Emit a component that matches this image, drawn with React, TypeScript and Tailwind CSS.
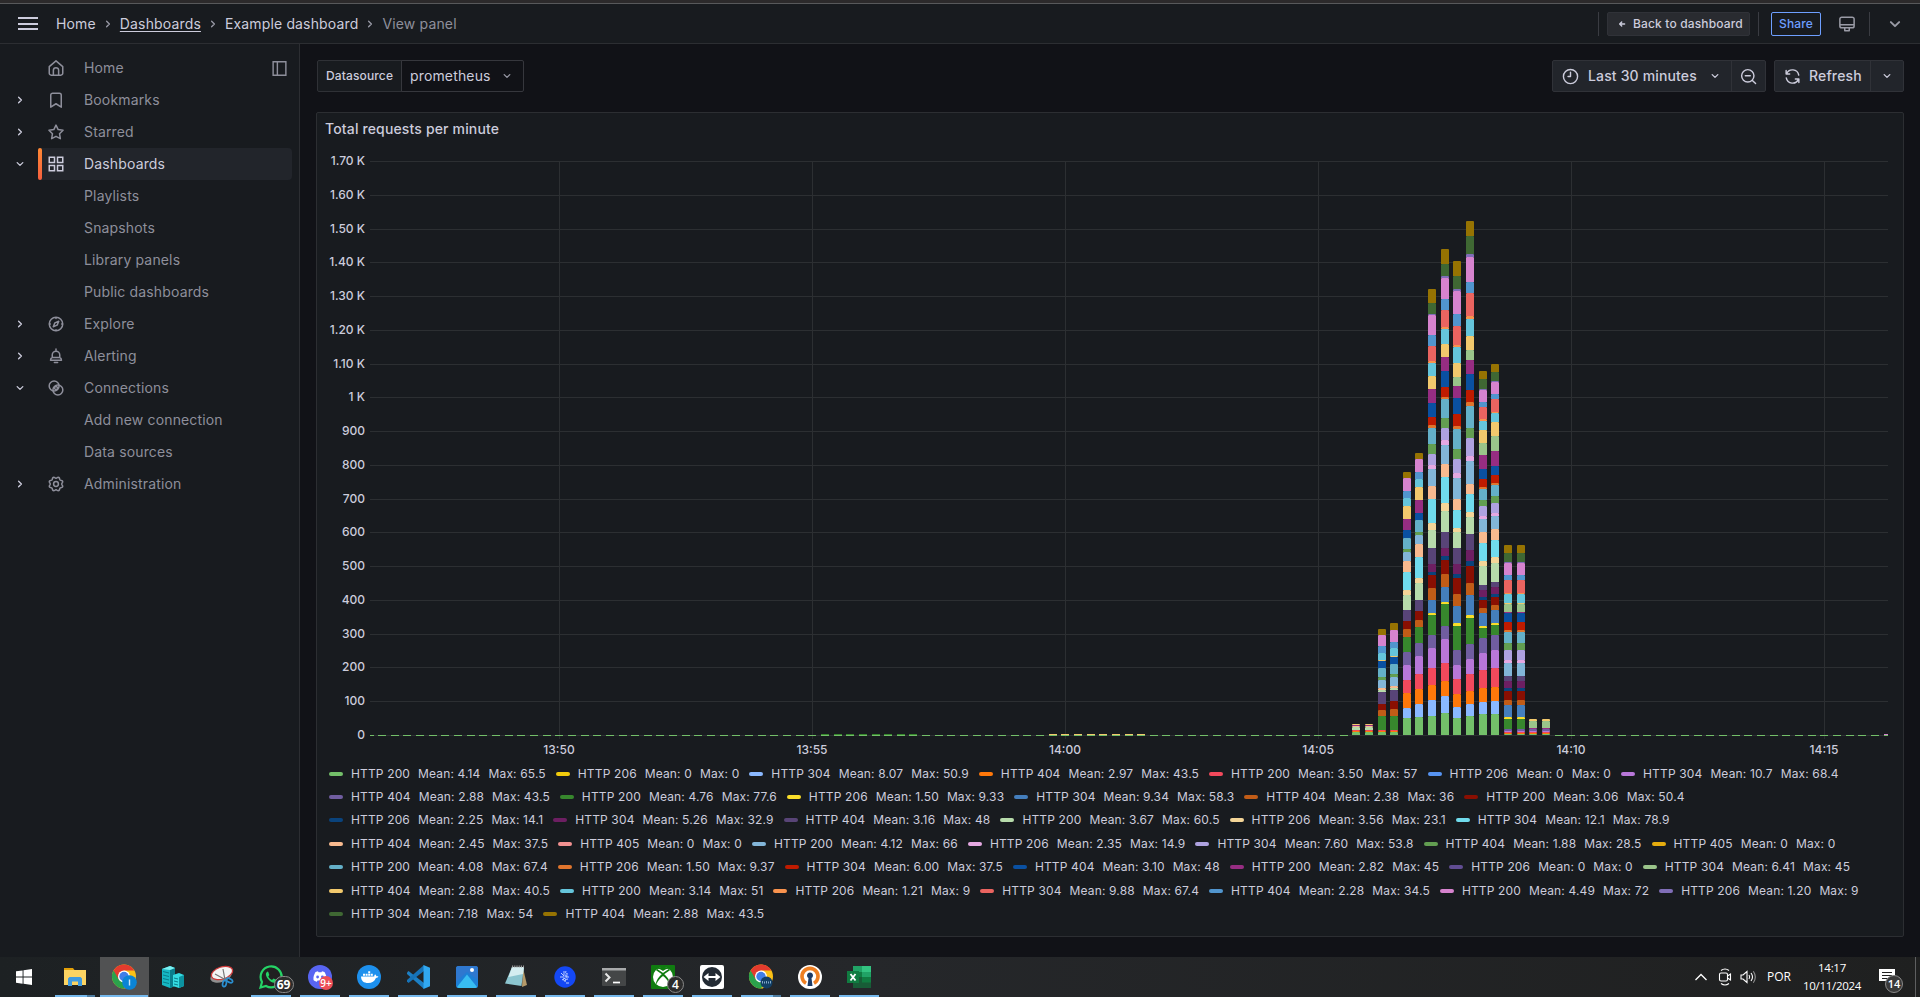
import React from "react";

const C = {
  s1: "#73BF69", s3: "#8AB8FF", s4: "#FF780A", s5: "#F2495C", s7: "#B877D9", s8: "#705DA0",
  s9: "#37872D", s10: "#FADE2A", s11: "#447EBC", s12: "#C15C17", s13: "#890F02", s14: "#0A437C",
  s15: "#6D1F62", s16: "#584477", s17: "#B7DBAB", s18: "#F4D598", s19: "#70DBED", s20: "#F9BA8F",
  s22: "#82B5D8", s23: "#E5A8E2", s24: "#AEA2E0", s25: "#629E51", s27: "#64B0C8", s28: "#E0752D",
  s29: "#BF1B00", s30: "#0A50A1", s31: "#962D82", s33: "#9AC48A", s34: "#F2C96D", s35: "#65C5DB",
  s36: "#F9934E", s37: "#EA6460", s38: "#5195CE", s39: "#D683CE", s40: "#806EB7", s41: "#3F6833",
  s42: "#967302",
} as const;
type Key = keyof typeof C;

// Each bar: "series:top" pairs from the bottom up, tops in thirds of a pixel below y=470.
const BARS: { x: number; d: string }[] = [
  { x: 1352, d: "1:786 4:783 5:780 17:771 20:768 31:765 34:762" },
  { x: 1365, d: "1:786 4:783 5:780 17:771 20:768 31:765 34:762" },
  { x: 1378, d: "1:786 4:783 5:780 9:738 12:720 13:702 16:666 17:660 20:654 22:630 25:621 27:594 30:573 34:570 35:549 38:528 39:495 42:477" },
  { x: 1390, d: "1:786 4:783 5:780 9:738 12:717 13:693 16:660 17:654 20:648 22:621 25:612 27:582 30:561 34:558 35:534 38:516 39:480 42:459" },
  { x: 1403, d: "1:744 3:714 4:669 5:630 7:585 8:546 9:501 12:477 13:453 16:420 17:375 18:360 19:306 20:273 22:246 25:237 27:204 30:180 31:147 34:108 35:84 38:63 39:24 42:6" },
  { x: 1415, d: "1:741 3:702 4:657 5:612 7:558 8:519 9:471 12:450 13:423 16:390 17:339 18:324 19:261 20:222 22:195 25:186 27:150 30:129 31:90 34:51 35:27 38:6 39:-33 42:-51" },
  { x: 1428, d: "1:738 3:690 4:645 5:594 7:534 8:495 9:435 10:429 11:390 12:354 13:315 14:306 15:282 16:234 17:180 18:159 19:87 20:48 22:-3 23:-15 24:-48 25:-78 27:-126 28:-135 29:-159 30:-201 31:-243 34:-282 35:-321 36:-327 37:-372 38:-405 39:-465 40:-468 41:-501 42:-543" },
  { x: 1441, d: "1:729 3:678 4:633 5:579 7:507 8:468 9:402 10:396 11:351 12:312 13:270 14:258 15:234 16:186 17:123 18:99 19:21 20:-18 22:-75 23:-90 24:-126 25:-156 27:-213 28:-219 29:-249 30:-297 31:-339 34:-378 35:-423 36:-429 37:-480 38:-513 39:-576 40:-582 41:-618 42:-663" },
  { x: 1453, d: "1:744 3:711 4:672 5:627 7:585 8:540 9:468 10:459 11:408 12:372 13:324 14:312 15:282 16:234 17:186 18:174 19:120 20:87 22:24 23:9 24:-33 25:-63 27:-123 28:-132 29:-168 30:-216 31:-252 33:-279 34:-321 35:-369 36:-375 37:-432 38:-468 39:-537 40:-543 41:-582 42:-627" },
  { x: 1466, d: "1:738 3:702 4:663 5:612 7:567 8:522 9:444 10:435 11:375 12:339 13:288 14:273 15:240 16:192 17:141 18:126 19:72 20:42 22:-27 23:-42 24:-96 25:-126 27:-192 28:-204 29:-240 30:-288 31:-330 33:-360 34:-402 35:-453 36:-462 37:-531 38:-564 39:-639 40:-648 41:-702 42:-747" },
  { x: 1479, d: "1:732 3:696 4:654 5:600 7:549 8:504 9:474 10:468 11:429 12:414 13:390 14:381 15:360 16:345 17:288 18:273 19:219 20:186 22:147 23:138 24:108 25:90 27:57 28:51 29:27 30:-3 31:-45 33:-81 34:-120 35:-147 36:-153 37:-189 38:-204 39:-240 40:-243 41:-273 42:-297" },
  { x: 1491, d: "1:732 3:693 4:651 5:594 7:540 8:495 9:465 10:459 11:420 12:405 13:381 14:372 15:351 16:336 17:279 18:261 19:210 20:177 22:138 23:129 24:99 25:78 27:45 28:39 29:15 30:-12 31:-57 33:-102 34:-144 35:-171 36:-174 37:-213 38:-228 39:-264 40:-267 41:-294 42:-318" },
  { x: 1504, d: "1:792 4:789 5:786 7:783 8:777 9:747 10:741 11:705 12:690 13:663 14:654 15:633 16:618 22:579 23:570 24:540 25:519 27:486 28:480 29:456 30:429 31:426 33:402 34:399 35:372 36:369 37:330 38:315 39:279 40:276 41:249 42:225" },
  { x: 1517, d: "1:792 4:789 5:786 7:783 8:777 9:747 10:741 11:705 12:690 13:663 14:654 15:633 16:618 22:579 23:570 24:540 25:519 27:486 28:480 29:456 30:429 31:426 33:402 34:399 35:372 36:369 37:330 38:315 39:279 40:276 41:249 42:225" },
  { x: 1529, d: "1:792 4:789 5:786 7:783 8:777 31:774 33:753 34:747" },
  { x: 1542, d: "1:792 4:789 5:786 7:783 8:777 31:774 33:753 34:747" },
];

// Chart origin inside the page: the drawing starts at (317, 149).
const OX = 317;
const OY = 149;

const Y_LABELS = ["1.70 K", "1.60 K", "1.50 K", "1.40 K", "1.30 K", "1.20 K", "1.10 K", "1 K", "900", "800", "700", "600", "500", "400", "300", "200", "100", "0"];
const X_LABELS: [number, string][] = [[559, "13:50"], [812, "13:55"], [1065, "14:00"], [1318, "14:05"], [1571, "14:10"], [1824, "14:15"]];

function Chart() {
  const marks: React.ReactNode[] = [];
  for (let n = -78; n <= 42; n++) {
    if (n >= 0 && n <= 15) continue;
    const raw = Math.round(1352.2 + 12.65 * n);
    const x = Math.max(raw, 370);
    const w = Math.min(raw + 8, 1888) - x;
    marks.push(<rect key={n} x={x} y={735} width={w} height={1} fill="#73BF69" />);
    const top = n >= -42 && n <= -35 ? "#37872D" : n >= -24 && n <= -17 ? "#F2C96D" : n === 42 ? "#D683CE" : null;
    if (top) marks.push(<rect key={`t${n}`} x={x} y={734} width={w} height={1} fill={top} />);
  }
  return (
    <svg className="block" width={1586} height={613} viewBox={`${OX} ${OY} 1586 613`} shapeRendering="crispEdges">
      {Y_LABELS.map((l, i) => {
        const y = Math.floor(735.4 - 33.76 * (17 - i));
        return (
          <g key={l}>
            <rect x={370} y={y} width={1518} height={1} fill="#2c2f32" />
            <text x={365} y={y + 4} textAnchor="end" className="fill-[#ccccdc] font-[Inter] text-[12px] font-medium">{l}</text>
          </g>
        );
      })}
      {X_LABELS.map(([x, l]) => (
        <g key={l}>
          <rect x={x} y={161} width={1} height={578} fill="#2c2f32" />
          <text x={x} y={754} textAnchor="middle" className="fill-[#ccccdc] font-[Inter] text-[12px] font-medium">{l}</text>
        </g>
      ))}
      {marks}
      {BARS.map((b) => {
        let bottom = 735;
        return (
          <g key={b.x}>
            {b.d.split(" ").map((seg) => {
              const [s, t] = seg.split(":");
              const top = Math.round(470 + Number(t) / 3);
              const h = bottom - top;
              bottom = top;
              return (
                <g key={s}>
                  <rect x={b.x} y={top} width={8} height={h} fill={C[`s${s}` as Key]} />
                  <rect x={b.x} y={top} width={1} height={1} fill="#181b1f" opacity={0.25} />
                  <rect x={b.x + 7} y={top} width={1} height={1} fill="#181b1f" opacity={0.25} />
                </g>
              );
            })}
          </g>
        );
      })}
    </svg>
  );
}

type Item = [string, string, string, string];
const LEGEND: Item[][] = [
  [["#73BF69", "200", "4.14", "65.5"], ["#F2CC0C", "206", "0", "0"], ["#8AB8FF", "304", "8.07", "50.9"], ["#FF780A", "404", "2.97", "43.5"], ["#F2495C", "200", "3.50", "57"], ["#5794F2", "206", "0", "0"], ["#B877D9", "304", "10.7", "68.4"]],
  [["#705DA0", "404", "2.88", "43.5"], ["#37872D", "200", "4.76", "77.6"], ["#FADE2A", "206", "1.50", "9.33"], ["#447EBC", "304", "9.34", "58.3"], ["#C15C17", "404", "2.38", "36"], ["#890F02", "200", "3.06", "50.4"]],
  [["#0A437C", "206", "2.25", "14.1"], ["#6D1F62", "304", "5.26", "32.9"], ["#584477", "404", "3.16", "48"], ["#B7DBAB", "200", "3.67", "60.5"], ["#F4D598", "206", "3.56", "23.1"], ["#70DBED", "304", "12.1", "78.9"]],
  [["#F9BA8F", "404", "2.45", "37.5"], ["#F29191", "405", "0", "0"], ["#82B5D8", "200", "4.12", "66"], ["#E5A8E2", "206", "2.35", "14.9"], ["#AEA2E0", "304", "7.60", "53.8"], ["#629E51", "404", "1.88", "28.5"], ["#E5AC0E", "405", "0", "0"]],
  [["#64B0C8", "200", "4.08", "67.4"], ["#E0752D", "206", "1.50", "9.37"], ["#BF1B00", "304", "6.00", "37.5"], ["#0A50A1", "404", "3.10", "48"], ["#962D82", "200", "2.82", "45"], ["#614D93", "206", "0", "0"], ["#9AC48A", "304", "6.41", "45"]],
  [["#F2C96D", "404", "2.88", "40.5"], ["#65C5DB", "200", "3.14", "51"], ["#F9934E", "206", "1.21", "9"], ["#EA6460", "304", "9.88", "67.4"], ["#5195CE", "404", "2.28", "34.5"], ["#D683CE", "200", "4.49", "72"], ["#806EB7", "206", "1.20", "9"]],
  [["#3F6833", "304", "7.18", "54"], ["#967302", "404", "2.88", "43.5"]],
];

function Icon({ children, size = 16, className = "", sw = 2 }: { children: React.ReactNode; size?: number; className?: string; sw?: number }) {
  return (
    <svg className={`shrink-0 ${className}`} width={size} height={size} viewBox="0 0 24 24" fill="none" stroke="currentColor" strokeWidth={sw} strokeLinecap="round" strokeLinejoin="round">
      {children}
    </svg>
  );
}
const Down = ({ size = 16, className = "" }) => <Icon size={size} className={className}><path d="M7.8 9.9 12 14.1l4.2-4.2" /></Icon>;
const Right = ({ size = 16, className = "" }) => <Icon size={size} className={className}><path d="M9.9 7.8 14.1 12l-4.2 4.2" /></Icon>;

// Outline of an eight-lobed gear.
const GEAR = Array.from({ length: 96 }, (_, i) => {
  const a = (i / 96) * Math.PI * 2;
  const r = 8.6 + 0.95 * Math.cos(8 * a + Math.PI);
  return `${i ? "L" : "M"}${(12 + r * Math.cos(a)).toFixed(2)} ${(12 + r * Math.sin(a)).toFixed(2)}`;
}).join("") + "Z";

const ICONS: Record<string, React.ReactNode> = {
  home: <><path d="M3 10.2 12 2.5l9 7.7V19a2.500 2.500 0 0 1-2.500 2.500h-13A2.500 2.500 0 0 1 3 19Z" /><path d="M8.500 21v-6a3.500 3.500 0 0 1 7 0v6" /></>,
  bookmark: <path d="M5 21.500V5.500A2.500 2.500 0 0 1 7.500 3h9A2.500 2.500 0 0 1 19 5.500v16l-7-4.500Z" />,
  star: <path d="m12 2.800 2.900 6 6.500.9-4.700 4.600 1.100 6.600L12 17.800l-5.800 3.100 1.100-6.600-4.700-4.600 6.500-.9Z" />,
  apps: <path strokeLinejoin="miter" d="M3 3h7v7H3ZM14 3h7v7h-7ZM3 14h7v7H3ZM14 14h7v7h-7Z" />,
  compass: <><circle cx="12" cy="12" r="9" /><path d="m15.700 8.300-2.200 5.200-5.200 2.200 2.200-5.200ZM12 3.500v1M12 19.500v1M3.500 12h1M19.500 12h1" /></>,
  bell: <path d="M12 2.500v2.200M7 14v-3.500a5 5 0 0 1 10 0V14c1.400.4 2.300 1.400 2.300 3.700H4.700C4.700 15.400 5.600 14.400 7 14ZM7 14h10M9.800 20.800h4.400" />,
  link: <><circle cx="9.500" cy="9.300" r="6.600" /><circle cx="14.500" cy="14.700" r="6.600" /><path d="m12 9.300 2.700 2.700-2.700 2.700L9.300 12Z" /></>,
  cog: <><circle cx="12" cy="12" r="3.200" /><path d={GEAR} /></>,
};

const NAV: { label: string; icon?: string; arrow?: "r" | "d"; active?: boolean; dock?: boolean }[] = [
  { label: "Home", icon: "home", dock: true },
  { label: "Bookmarks", icon: "bookmark", arrow: "r" },
  { label: "Starred", icon: "star", arrow: "r" },
  { label: "Dashboards", icon: "apps", arrow: "d", active: true },
  { label: "Playlists" },
  { label: "Snapshots" },
  { label: "Library panels" },
  { label: "Public dashboards" },
  { label: "Explore", icon: "compass", arrow: "r" },
  { label: "Alerting", icon: "bell", arrow: "r" },
  { label: "Connections", icon: "link", arrow: "d" },
  { label: "Add new connection" },
  { label: "Data sources" },
  { label: "Administration", icon: "cog", arrow: "r" },
];

function Sidebar() {
  return (
    <nav className="w-[300px] shrink-0 border-r border-[#2c2e32] bg-[#181b1f] pt-2 text-[14px] tracking-[0.15px] text-[#8e8f9b]">
      {NAV.map((n) => (
        <div key={n.label} className="flex h-8 items-center pr-[7px]">
          <div className="flex w-[38px] items-center pl-3 text-[#ccccdc]">
            {n.arrow === "r" && <Right />}
            {n.arrow === "d" && <Down />}
          </div>
          <div className={`flex h-8 flex-1 items-center rounded-sm ${n.active ? "bg-[#22252b] text-[#ccccdc]" : ""}`}>
            <span className={`h-8 w-1 rounded-sm ${n.active ? "bg-linear-to-b from-[#ff8833] to-[#f55f3e]" : ""}`} />
            <span className="ml-[5px] w-[37px]">{n.icon && <Icon size={18}>{ICONS[n.icon]}</Icon>}</span>
            <span className="flex-1 pb-[2px]">{n.label}</span>
            {n.dock && <Icon size={17} className="mr-1"><path strokeLinejoin="miter" d="M3 2.500h18v19H3ZM9 3v18" /></Icon>}
          </div>
        </div>
      ))}
    </nav>
  );
}

function Header() {
  return (
    <header className="flex h-10 items-center border-b border-[#2c2e32] bg-[#181b1f] pl-[18px] text-[14px] tracking-[0.15px] text-[#ccccdc]">
      <div className="flex w-5 flex-col gap-[3.500px]">
        <span className="h-[2px] bg-[#ccccdc]" />
        <span className="h-[2px] bg-[#ccccdc]" />
        <span className="h-[2px] bg-[#ccccdc]" />
      </div>
      <div className="ml-[18px] flex items-center">
        <span>Home</span>
        <Right className="mx-1 text-[#9899a5]" />
        <span className="underline underline-offset-2">Dashboards</span>
        <Right className="mx-1 text-[#9899a5]" />
        <span>Example dashboard</span>
        <Right className="mx-1 text-[#9899a5]" />
        <span className="text-[#8e8f9b]">View panel</span>
      </div>
      <div className="ml-auto flex items-center">
        <span className="h-6 w-px bg-[#3a3c42]" />
        <div className="ml-2 flex h-6 w-[143px] items-center rounded-xs border border-[#303238] bg-[#292b30] pl-[7px] text-[12px] font-medium">
          <Icon size={14} sw={2.400}><path d="M16.500 12h-8M11.500 8.500 8 12l3.500 3.500" /></Icon>
          <span className="ml-1">Back to dashboard</span>
        </div>
        <span className="ml-2 h-6 w-px bg-[#3a3c42]" />
        <div className="ml-3 flex h-6 w-[50px] items-center justify-center rounded-xs border border-[#6e9fff] text-[12px] font-medium text-[#6e9fff]">Share</div>
        <Icon size={18} className="ml-[17px] text-[#9a9ba6]"><path d="M5 3h14a2.500 2.500 0 0 1 2.500 2.500v9A2.500 2.500 0 0 1 19 17H5a2.500 2.500 0 0 1-2.500-2.500v-9A2.500 2.500 0 0 1 5 3ZM2.500 13h19M9 17v4h6v-4" /></Icon>
        <span className="ml-[13px] h-6 w-px bg-[#3a3c42]" />
        <Icon size={18} className="mr-4 ml-4 text-[#9a9ba6]" sw={2.600}><path d="m6.500 9.500 5.500 5.300 5.500-5.300" /></Icon>
      </div>
    </header>
  );
}

function Controls() {
  return (
    <div className="flex h-8 text-[14px] tracking-[0.15px] text-[#ccccdc]">
      <div className="ml-px flex w-[85px] items-center justify-center rounded-l-xs border border-[#2f3136] bg-[#181b1f] text-[12px] font-medium">Datasource</div>
      <div className="-ml-px flex w-[123px] items-center justify-between rounded-r-xs border border-[#36373d] pr-2 pl-2">
        <span className="pb-px">prometheus</span>
        <Down className="text-[#9899a5]" />
      </div>
      <div className="ml-auto flex rounded-xs border border-[#303238] bg-[#22252b] font-medium">
        <div className="flex w-[178px] items-center pl-[9px]">
          <Icon size={17}><circle cx="12" cy="12" r="10" /><path d="M12 6v6H8.500" /></Icon>
          <span className="ml-[9px] flex-1 pb-px">Last 30 minutes</span>
          <Down className="mr-2" />
        </div>
        <div className="flex w-[34px] items-center justify-center border-l border-[#303238]">
          <Icon size={17}><circle cx="11" cy="11" r="8.700" /><path d="M7.500 11h7M17.500 17.500 22 22" /></Icon>
        </div>
      </div>
      <div className="ml-2 flex rounded-xs border border-[#303238] bg-[#22252b] font-medium">
        <div className="flex w-[95px] items-center pl-[9px]">
          <Icon size={17}><path d="M3 3.500v5h5M3.600 8.300A9 9 0 0 1 20.800 10M21 20.500v-5h-5M20.400 15.700A9 9 0 0 1 3.200 14" /></Icon>
          <span className="ml-[8px] pb-px">Refresh</span>
        </div>
        <div className="flex w-[33px] items-center justify-center border-l border-[#303238]"><Down /></div>
      </div>
    </div>
  );
}

function Chrome({ badge }: { badge: React.ReactNode }) {
  return (
    <svg width="26" height="26" viewBox="0 0 26 26">
      <circle cx="13" cy="12.500" r="12" fill="#fbc116" />
      <path d="M13 12.500 2.600 6.500a12 12 0 0 0 10.400 18l5.200-9Z" fill="#2ba24c" />
      <path d="M2.600 6.500a12 12 0 0 1 20.800 0H13l-5.200 9Z" fill="#e33b2e" />
      <circle cx="13" cy="12.500" r="6" fill="#fff" />
      <circle cx="13" cy="12.500" r="4.700" fill="#3f7ee8" />
      {badge}
    </svg>
  );
}

const TASKS: { bar: 0 | 1 | 2; active?: boolean; icon: React.ReactNode; badge?: React.ReactNode }[] = [
  {
    bar: 2,
    icon: (
      <svg width="22" height="20" viewBox="0 0 22 20">
        <path d="M0 1h9l1.500 2H0Z" fill="#e3a008" /><path d="M0 3h22v15H0Z" fill="#fcd462" />
        <path d="M4 18v-6.500L5.500 10h11l1.500 1.500V19h-4v-4.500H8V19H4Z" fill="#3f9be0" />
      </svg>
    ),
  },
  { bar: 1, active: true, icon: <Chrome badge={<><circle cx="18.500" cy="18.500" r="7.300" fill="#0a84d6" /><path d="M18.500 15.500v6" stroke="#cfe8fa" strokeWidth="1.400" /></>} /> },
  {
    bar: 0,
    icon: (
      <svg width="22" height="22" viewBox="0 0 22 22">
        <path d="M0 3 8 0l5 2v18l-5 2-8-3Z" fill="#16b8c4" /><path d="M8 4v18l5-2V2Z" fill="#0a7d8c" />
        <path d="m11 9 6-2 5 2v11l-5 2-6-2Z" fill="#35dbe2" /><path d="M17 11v11l5-2V9Z" fill="#0c93a1" />
        <path d="M1 5.500 7 7M1 9l6 1.500M1 12.500 7 14M1 16l6 1.500M12 12l4 1M12 15l4 1M12 18l4 1" stroke="#087d89" />
        <path d="M0 3 8 0l5 2-5 2Z" fill="#7cf0f2" />
      </svg>
    ),
  },
  {
    bar: 0,
    icon: (
      <svg width="24" height="24" viewBox="0 0 24 24">
        <ellipse cx="11" cy="11" rx="11" ry="6" fill="#8f8f8f" transform="rotate(-18 11 11)" />
        <ellipse cx="12" cy="8" rx="11" ry="6" fill="#f4f4f4" stroke="#cf3a3a" strokeWidth="1.200" transform="rotate(-18 12 8)" />
        <path d="m5 9 11 6M13 4l2 11" stroke="#777" strokeWidth="1.200" />
        <g fill="none" stroke="#2b8fd0" strokeWidth="1.700"><ellipse cx="14.500" cy="18.500" rx="1.800" ry="3.200" transform="rotate(15 14.500 18.500)" /><ellipse cx="19.500" cy="15.500" rx="3.300" ry="1.800" transform="rotate(25 19.500 15.500)" /></g>
      </svg>
    ),
  },
  {
    bar: 1,
    icon: (
      <svg width="24" height="24" viewBox="0 0 24 24">
        <path d="M1.500 22.500 3 17a10.500 10.500 0 1 1 4 4Z" fill="#202020" stroke="#25d366" strokeWidth="2.200" />
        <path d="M8.500 6.500C6 8 6.500 11 9.500 14.500s6.500 4.300 8 2l-.2-1.700-2.800-1.300-1.500 1.400c-2-.8-3-2-3.700-3.500l1-1.400-1-3Z" fill="#25d366" />
      </svg>
    ),
    badge: <span className="absolute top-[19px] left-[27px] z-10 flex h-[17px] w-5 items-center justify-center rounded-full border border-[#8a8a8a] bg-[#2c2c2c] text-[12px] font-bold text-white">69</span>,
  },
  {
    bar: 1,
    icon: (
      <svg width="24" height="24" viewBox="0 0 24 24">
        <circle cx="12" cy="12" r="12" fill="#5865f2" />
        <path d="M7.500 7 10 6.300l.5 1h3l.5-1 2.500.7c1.500 2.500 2.300 5 2 8-1 .9-2 1.400-3.300 1.800l-.8-1.300h-4.800l-.8 1.300C7.500 16.400 6.500 16 5.500 15c-.3-3 .5-5.500 2-8Z" fill="#fff" />
        <circle cx="9.600" cy="12" r="1.400" fill="#5865f2" /><circle cx="14.400" cy="12" r="1.400" fill="#5865f2" />
      </svg>
    ),
    badge: <span className="absolute top-[19px] left-[23.500px] z-10 flex h-[14px] w-[14px] items-center justify-center rounded-full bg-[#ed4e57] text-[10px] font-semibold text-white">9+</span>,
  },
  {
    bar: 1,
    icon: (
      <svg width="24" height="24" viewBox="0 0 24 24">
        <circle cx="12" cy="12" r="12" fill="#1d90ed" />
        <path d="M4 11.500h13.200c0-1 .3-1.700.9-2.300.8.600 1.200 1.200 1.300 2 .8-.1 1.500 0 2 .3-.5 1-1.400 1.400-2.500 1.400-1.300 3.500-4 5.100-7.700 5.100-4.500 0-7-2-7.200-6.500Z" fill="#fff" />
        <path d="M6 8.800h2v2H6ZM8.600 8.800h2v2h-2ZM11.200 8.800h2v2h-2ZM13.800 8.800h2v2h-2ZM11.200 6.200h2v2h-2Z" fill="#fff" />
      </svg>
    ),
  },
  {
    bar: 1,
    icon: (
      <svg width="24" height="24" viewBox="0 0 24 24">
        <path d="M1 7.500 2.500 6 18 18v6L1 9Z" fill="#1c7fc4" /><path d="M1 16.500 2.500 18 18 6V0L1 15Z" fill="#1673b8" />
        <path d="m17.500 0 6.500 2.800v18.400L17.500 24Z" fill="#31a8f0" />
      </svg>
    ),
  },
  {
    bar: 1,
    icon: (
      <svg width="22" height="22" viewBox="0 0 22 22">
        <rect width="22" height="22" rx="2.500" fill="#1d7fd6" /><path d="M0 2.500A2.500 2.500 0 0 1 2.500 0h17A2.500 2.500 0 0 1 22 2.500V14L11 6 0 16Z" fill="#2f78cf" />
        <path d="M1 21 11 8.500 21 21q-.7 1-2 1H3q-1.300 0-2-1Z" fill="#38bdf2" /><circle cx="16" cy="4" r="2" fill="#fff" />
      </svg>
    ),
  },
  {
    bar: 1,
    icon: (
      <svg width="24" height="24" viewBox="0 0 24 24">
        <path d="m19 3 4 17-5 2Z" fill="#b59a6a" /><path d="M8 2h12l-2.500 19L1 18.500Z" fill="#8cc5cf" /><path d="M8 2h12l-1 7L4.500 12Z" fill="#d5edf0" />
        <path d="M8 1.500h12" stroke="#999" strokeWidth="2" strokeDasharray="1.200 1" />
      </svg>
    ),
  },
  {
    bar: 1,
    icon: (
      <svg width="22" height="22" viewBox="0 0 22 22">
        <circle cx="11" cy="11" r="10.700" fill="#1448f5" />
        <g fill="none" stroke="#cfdcff" strokeWidth="0.900"><path d="M10 5v4M12 5c-1 2 0 3 2 3M7 7l3 3M6 11h4M8 14l3-2M12 11h3M11 16c0-2 1-3 3-3M12 17h3" /><circle cx="12" cy="10" r="1.100" /><circle cx="10.500" cy="13.500" r="1.100" /></g>
      </svg>
    ),
  },
  {
    bar: 1,
    icon: (
      <svg width="24" height="18" viewBox="0 0 24 18">
        <rect width="24" height="18" rx="1" fill="#444647" /><rect width="24" height="2.500" fill="#a8aaab" />
        <path d="m3.500 5.500 4 4-4 4" fill="none" stroke="#e8e8e8" strokeWidth="2" /><path d="M11 14.500h7" stroke="#fff" strokeWidth="1.700" />
      </svg>
    ),
  },
  {
    bar: 1,
    icon: (
      <svg width="24" height="24" viewBox="0 0 24 24">
        <rect width="24" height="24" rx="1" fill="#107c10" /><circle cx="12" cy="12" r="10" fill="#fff" />
        <path d="M5.500 3.800C8 3.300 10.500 4.800 12 6c1.500-1.200 4-2.700 6.500-2.200C15 1 9 1 5.500 3.800Z" fill="#107c10" />
        <path d="M12 8c4.500 3.500 7.700 9 6.800 11.400C17 15.500 14.500 13 12 11c-2.500 2-5 4.500-6.800 8.400C4.300 17 7.500 11.500 12 8Z" fill="#107c10" />
        <path d="M5.500 4.500 12 9l6.500-4.500" stroke="#107c10" strokeWidth="1.600" fill="none" />
      </svg>
    ),
    badge: <span className="absolute top-[19px] left-[28.500px] z-10 flex h-[17px] w-[17px] items-center justify-center rounded-full border border-[#8a8a8a] bg-[#2c2c2c] text-[12px] font-semibold text-white">4</span>,
  },
  {
    bar: 1,
    icon: (
      <svg width="24" height="24" viewBox="0 0 24 24">
        <rect width="24" height="24" rx="2" fill="#fff" /><circle cx="12" cy="12" r="10" fill="#222a33" />
        <path d="m3.500 12 5-4v3h7V8l5 4-5 4v-3h-7v3Z" fill="#fff" />
      </svg>
    ),
  },
  { bar: 2, icon: <Chrome badge={<><circle cx="18.500" cy="18.500" r="6" fill="#123f66" /><path d="M14.500 19.500v-2.500M16.500 19.500v-2M18.500 19.500v-2.500M20.500 19.500v-2M22.500 19.500v-2.500" stroke="#8fb6d4" strokeWidth="0.900" /></>} /> },
  {
    bar: 1,
    icon: (
      <svg width="24" height="24" viewBox="0 0 24 24">
        <circle cx="12" cy="12" r="12" fill="#fff" />
        <path d="M8 18.300a8 8 0 1 1 8 0" fill="none" stroke="#ee7f22" strokeWidth="3.600" />
        <path d="M10.500 13a3 3 0 1 1 3 0l1 8h-5Z" fill="#1b3a66" />
      </svg>
    ),
  },
  {
    bar: 1,
    icon: (
      <svg width="24" height="22" viewBox="0 0 24 22">
        <path d="M6 0h9v6H6Z" fill="#21a366" /><path d="M15 0h9v6h-9Z" fill="#33c481" /><path d="M6 6h9v5H6Z" fill="#107c41" /><path d="M15 6h9v5h-9Z" fill="#21a366" />
        <path d="M6 11h18v11H6Z" fill="#185c37" /><path d="M15 11h9v5.500h-9Z" fill="#107c41" /><rect y="5" width="12" height="12" fill="#107c41" />
        <path d="m3.500 8 5 6.500M8.500 8l-5 6.500" stroke="#fff" strokeWidth="1.800" />
      </svg>
    ),
  },
];

function Taskbar() {
  return (
    <footer className="flex h-10 items-stretch bg-linear-to-r from-[#1d2123] via-[#25272a] via-45% to-[#1f2020] font-['Open_Sans'] text-white">
      <div className="flex w-12 items-center justify-center">
        <svg width="16" height="16" viewBox="0 0 16 16" fill="#fff"><path d="M0 2.300 6.600 1.400v6.200H0ZM7.500 1.300 16 0v7.600H7.500ZM0 8.500h6.600v6.200L0 13.800ZM7.500 8.500H16V16l-8.500-1.200Z" /></svg>
      </div>
      <div className="flex pl-[2.500px]">
        {TASKS.map((t, i) => (
          <div key={i} className={`relative flex h-10 w-[49px] flex-col items-center ${t.active ? "bg-[#515253]" : ""}`}>
            <div className="flex h-[38px] items-center pt-[2px]">{t.icon}</div>
            {t.badge}
            <div className={`flex h-[2px] ${t.active ? "w-[48px]" : "w-10"}`}>
              {t.bar > 0 && <span className="flex-1 bg-[#76b9ed]" />}
              {t.bar === 2 && <span className="w-2 bg-[#4f7da1]" />}
            </div>
          </div>
        ))}
      </div>
      <div className="ml-auto flex items-center">
        <svg width="12" height="8" viewBox="0 0 12 8" fill="none" stroke="#fff" strokeWidth="1.300"><path d="m.500 7 5.500-5.500L11.500 7" /></svg>
        <svg className="ml-[11px]" width="14" height="18" viewBox="0 0 14 18" fill="none" stroke="#fff" strokeWidth="1.100"><rect x="1.500" y="5" width="8" height="8" rx="1.500" /><path d="m9.500 8 3-2v6l-3-2M3 2.500q4-3 8 0M3 15.500q4 3 8 0" /></svg>
        <svg className="ml-[8px]" width="17" height="14" viewBox="0 0 17 14" fill="none" stroke="#fff" strokeWidth="1.100"><path d="M1 5h2l4-3.500v11L3 9H1ZM9 5q1.300 2 0 4M11 3q3 4 0 8" /><path d="M13.300 1.300q4 5.700 0 11.400" opacity=".5" /></svg>
        <span className="ml-[10px] w-[27px] text-[12px]">POR</span>
        <div className="ml-[6px] flex w-[64px] flex-col items-center text-[11.500px] leading-[18px] tracking-[-0.300px]">
          <span>14:17</span>
          <span>10/11/2024</span>
        </div>
        <div className="relative ml-[14px] h-10 w-[37px]">
          <svg className="mt-3 ml-px" width="17" height="16" viewBox="0 0 17 16"><path d="M0 0h16v12h-5l-3 3v-3H0Z" fill="#fff" /><path d="M3 3.500h10M3 6.500h10M3 9.500h6" stroke="#222" /></svg>
          <span className="absolute top-[18px] left-[7px] flex h-[18px] w-[18px] items-center justify-center rounded-full border border-[#8a8a8a] bg-[#3a3a3a] text-[11px] font-semibold">14</span>
        </div>
        <span className="mr-1 h-10 w-px bg-[#5e5f60]" />
      </div>
    </footer>
  );
}

export default function App() {
  return (
    <div className="flex h-[997px] w-[1920px] flex-col overflow-hidden bg-[#111217] font-[Inter,sans-serif]">
      <div className="h-1 shrink-0 border-b border-[#58595b] bg-[#2c2a2b]" />
      <Header />
      <div className="flex min-h-0 flex-1">
        <Sidebar />
        <main className="flex-1 px-4 pt-4">
          <Controls />
          <section className="mt-5 h-[825px] rounded-xs border border-[#2c2e32] bg-[#181b1f]">
            <h2 className="mb-[5px] flex h-[31px] items-center pl-2 text-[14px] font-medium tracking-[0.15px] text-[#ccccdc]">Total requests per minute</h2>
            <Chart />
            <div className="flex flex-col pl-3 text-[12px] tracking-[0.143px] whitespace-nowrap text-[#ccccdc]">
              {LEGEND.map((row, i) => (
                <div key={i} className="flex h-[23.400px] items-center">
                  {row.map(([c, code, mean, max], j) => (
                    <div key={j} className="mr-[10px] flex items-center gap-2">
                      <span className="h-1 w-[14px] rounded-full" style={{ backgroundColor: c }} />
                      <span>HTTP {code}</span>
                      <span>Mean: {mean}</span>
                      <span>Max: {max}</span>
                    </div>
                  ))}
                </div>
              ))}
            </div>
          </section>
        </main>
      </div>
      <Taskbar />
    </div>
  );
}
